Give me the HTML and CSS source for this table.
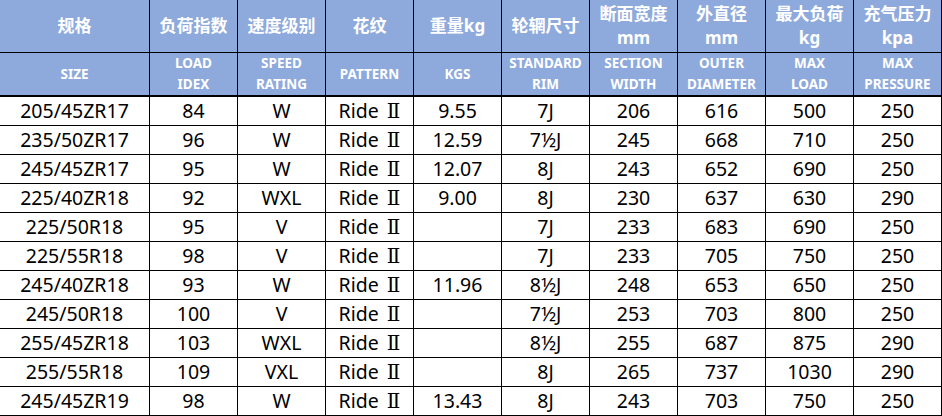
FILE: index.html
```html
<!DOCTYPE html>
<html lang="zh">
<head>
<meta charset="utf-8">
<title>轮胎规格表</title>
<link rel="stylesheet" href="styles.css">
</head>
<body>
<div class="sheet">
  <div class="c h1">规格</div>
  <div class="c h1">负荷指数</div>
  <div class="c h1">速度级别</div>
  <div class="c h1">花纹</div>
  <div class="c h1">重量kg</div>
  <div class="c h1">轮辋尺寸</div>
  <div class="c h1">断面宽度<br>mm</div>
  <div class="c h1">外直径<br>mm</div>
  <div class="c h1">最大负荷<br>kg</div>
  <div class="c h1">充气压力<br>kpa</div>

  <div class="c h2">SIZE</div>
  <div class="c h2">LOAD<br>IDEX</div>
  <div class="c h2">SPEED<br>RATING</div>
  <div class="c h2">PATTERN</div>
  <div class="c h2">KGS</div>
  <div class="c h2">STANDARD<br>RIM</div>
  <div class="c h2">SECTION<br>WIDTH</div>
  <div class="c h2">OUTER<br>DIAMETER</div>
  <div class="c h2">MAX<br>LOAD</div>
  <div class="c h2">MAX<br>PRESSURE</div>

  <div class="c">205/45ZR17</div><div class="c">84</div><div class="c">W</div><div class="c"><span>Ride <span class="rn">Ⅱ</span></span></div><div class="c">9.55</div><div class="c">7J</div><div class="c">206</div><div class="c">616</div><div class="c">500</div><div class="c">250</div>
  <div class="c">235/50ZR17</div><div class="c">96</div><div class="c">W</div><div class="c"><span>Ride <span class="rn">Ⅱ</span></span></div><div class="c">12.59</div><div class="c">7½J</div><div class="c">245</div><div class="c">668</div><div class="c">710</div><div class="c">250</div>
  <div class="c">245/45ZR17</div><div class="c">95</div><div class="c">W</div><div class="c"><span>Ride <span class="rn">Ⅱ</span></span></div><div class="c">12.07</div><div class="c">8J</div><div class="c">243</div><div class="c">652</div><div class="c">690</div><div class="c">250</div>
  <div class="c">225/40ZR18</div><div class="c">92</div><div class="c">WXL</div><div class="c"><span>Ride <span class="rn">Ⅱ</span></span></div><div class="c">9.00</div><div class="c">8J</div><div class="c">230</div><div class="c">637</div><div class="c">630</div><div class="c">290</div>
  <div class="c">225/50R18</div><div class="c">95</div><div class="c">V</div><div class="c"><span>Ride <span class="rn">Ⅱ</span></span></div><div class="c"></div><div class="c">7J</div><div class="c">233</div><div class="c">683</div><div class="c">690</div><div class="c">250</div>
  <div class="c">225/55R18</div><div class="c">98</div><div class="c">V</div><div class="c"><span>Ride <span class="rn">Ⅱ</span></span></div><div class="c"></div><div class="c">7J</div><div class="c">233</div><div class="c">705</div><div class="c">750</div><div class="c">250</div>
  <div class="c">245/40ZR18</div><div class="c">93</div><div class="c">W</div><div class="c"><span>Ride <span class="rn">Ⅱ</span></span></div><div class="c">11.96</div><div class="c">8½J</div><div class="c">248</div><div class="c">653</div><div class="c">650</div><div class="c">250</div>
  <div class="c">245/50R18</div><div class="c">100</div><div class="c">V</div><div class="c"><span>Ride <span class="rn">Ⅱ</span></span></div><div class="c"></div><div class="c">7½J</div><div class="c">253</div><div class="c">703</div><div class="c">800</div><div class="c">250</div>
  <div class="c">255/45ZR18</div><div class="c">103</div><div class="c">WXL</div><div class="c"><span>Ride <span class="rn">Ⅱ</span></span></div><div class="c"></div><div class="c">8½J</div><div class="c">255</div><div class="c">687</div><div class="c">875</div><div class="c">290</div>
  <div class="c">255/55R18</div><div class="c">109</div><div class="c">VXL</div><div class="c"><span>Ride <span class="rn">Ⅱ</span></span></div><div class="c"></div><div class="c">8J</div><div class="c">265</div><div class="c">737</div><div class="c">1030</div><div class="c">290</div>
  <div class="c">245/45ZR19</div><div class="c">98</div><div class="c">W</div><div class="c"><span>Ride <span class="rn">Ⅱ</span></span></div><div class="c">13.43</div><div class="c">8J</div><div class="c">243</div><div class="c">703</div><div class="c">750</div><div class="c">250</div>
</div>
</body>
</html>
```
FILE: styles.css
```css
html, body {
  margin: 0;
  padding: 0;
  background: #ffffff;
}
.sheet {
  display: grid;
  grid-template-columns: 150px repeat(9, 88px);
  grid-template-rows: 53px 44px repeat(11, 29px);
  width: 942px;
  font-family: "Noto Sans", "Noto Sans CJK SC", sans-serif;
  color: #000000;
}
.c {
  box-sizing: border-box;
  border-right: 1px solid #000;
  border-bottom: 1px solid #000;
  display: flex;
  align-items: center;
  justify-content: center;
  text-align: center;
  font-size: 19.5px;
  line-height: 24px;
  white-space: nowrap;
}
.rn {
  font-family: "DejaVu Serif", "DejaVu Sans", serif;
  font-size: 20px;
  margin-left: 3px;
}
.h1 {
  background: #8ea9db;
  color: #ffffff;
  font-weight: 700;
  font-size: 17px;
  line-height: 24px;
}
.h2 {
  background: #8ea9db;
  color: #ffffff;
  font-weight: 700;
  font-size: 13.5px;
  line-height: 21px;
  border-bottom-width: 2px;
}
```
